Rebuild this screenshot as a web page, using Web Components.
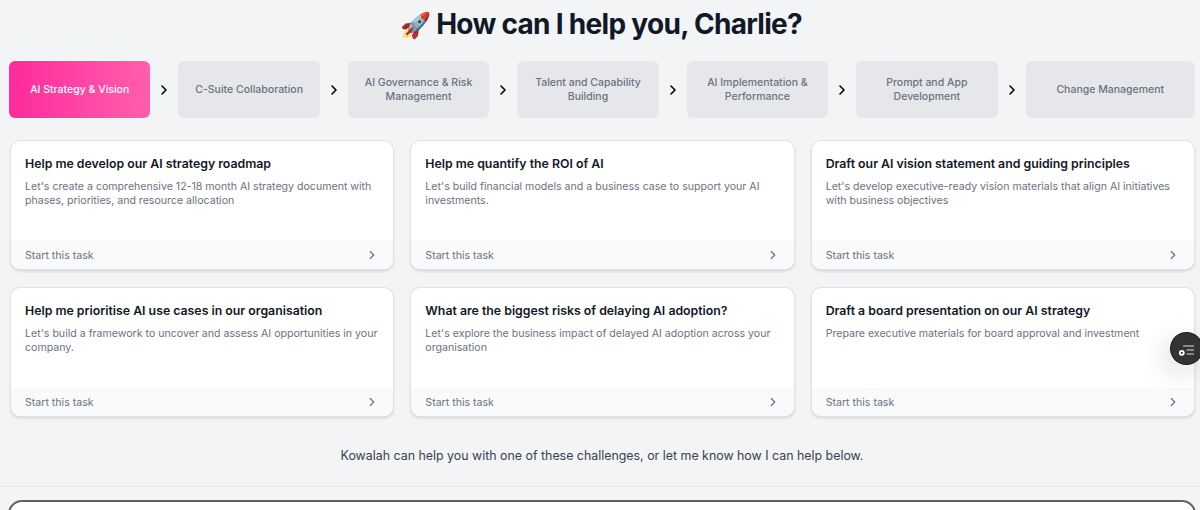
<!DOCTYPE html>
<html lang="en">
<head>
<meta charset="utf-8">
<title>How can I help you</title>
<style>
  html, body { margin: 0; height: 510px; overflow: hidden; background: #f3f4f6; }
  body { font-family: Inter, "Liberation Sans", sans-serif; color: #111827; }
  .rocket { font-size: 25px; }
</style>
</head>
<body>
<x-help-page>
  <span slot="title"><span class="rocket">🚀</span> How can I help you, Charlie?</span>
  <x-step-bar slot="steps">
    <x-step active>AI Strategy &amp; Vision</x-step>
    <x-step>C-Suite Collaboration</x-step>
    <x-step>AI Governance &amp; Risk Management</x-step>
    <x-step>Talent and Capability Building</x-step>
    <x-step>AI Implementation &amp; Performance</x-step>
    <x-step>Prompt and App Development</x-step>
    <x-step>Change Management</x-step>
  </x-step-bar>
  <x-task-grid slot="tasks">
    <x-task-card heading="Help me develop our AI strategy roadmap">Let's create a comprehensive 12-18 month AI strategy document with phases, priorities, and resource allocation</x-task-card>
    <x-task-card heading="Help me quantify the ROI of AI">Let's build financial models and a business case to support your AI investments.</x-task-card>
    <x-task-card heading="Draft our AI vision statement and guiding principles">Let's develop executive-ready vision materials that align AI initiatives with business objectives</x-task-card>
    <x-task-card heading="Help me prioritise AI use cases in our organisation">Let's build a framework to uncover and assess AI opportunities in your company.</x-task-card>
    <x-task-card heading="What are the biggest risks of delaying AI adoption?">Let's explore the business impact of delayed AI adoption across your organisation</x-task-card>
    <x-task-card heading="Draft a board presentation on our AI strategy">Prepare executive materials for board approval and investment</x-task-card>
  </x-task-grid>
  <span slot="hint">Kowalah can help you with one of these challenges, or let me know how I can help below.</span>
  <x-chat-box slot="chat"></x-chat-box>
</x-help-page>
<x-fab></x-fab>

<script>
const CHEVRON = `<svg viewBox="0 0 24 24" fill="none" stroke="currentColor" stroke-linecap="round" stroke-linejoin="round"><path d="m9 18 6-6-6-6"/></svg>`;

class HelpPage extends HTMLElement {
  constructor() {
    super();
    this.attachShadow({ mode: "open" });
    this.shadowRoot.innerHTML = `
      <style>
        :host { display: block; height: 510px; overflow: hidden; }
        h1 {
          margin: 0;
          padding: 6px 0 0 2px;
          height: 61px;
          box-sizing: border-box;
          font-size: 28px;
          line-height: 36px;
          font-weight: 700;
          letter-spacing: -0.7px;
          text-align: center;
          color: #111827;
        }
        .steps { padding: 0 5px 0 9px; }
        .tasks { padding: 23px 6px 0 11px; }
        .hint {
          margin: 0;
          padding: 30px 0 0 4px;
          height: 71px;
          box-sizing: border-box;
          font-size: 12.4px;
          line-height: 20px;
          text-align: center;
          color: #374151;
          border-bottom: 1px solid #e5e7eb;
        }
        .chat { padding: 13px 4px 0 8px; }
      </style>
      <h1><slot name="title"></slot></h1>
      <div class="steps"><slot name="steps"></slot></div>
      <div class="tasks"><slot name="tasks"></slot></div>
      <p class="hint"><slot name="hint"></slot></p>
      <div class="chat"><slot name="chat"></slot></div>
    `;
  }
}

class StepBar extends HTMLElement {
  constructor() {
    super();
    this.attachShadow({ mode: "open" });
    this.shadowRoot.innerHTML = `
      <style>
        :host { display: flex; height: 57px; align-items: stretch; }
      </style>
      <slot></slot>
    `;
  }
}

class Step extends HTMLElement {
  constructor() {
    super();
    this.attachShadow({ mode: "open" });
    this.shadowRoot.innerHTML = `
      <style>
        :host { display: flex; flex: 1 1 0; align-items: center; min-width: 0; }
        :host(:last-child) .arrow { display: none; }
        .pill {
          flex: 1 1 0;
          align-self: stretch;
          display: flex;
          align-items: center;
          justify-content: center;
          padding: 0 14px;
          box-sizing: border-box;
          text-align: center;
          font-size: 10.5px;
          line-height: 14px;
          font-weight: 500;
          border-radius: 6px;
          background: #e5e7eb;
          color: #6b7280;
        }
        :host([active]) .pill {
          background: linear-gradient(to right, #ff2a9d, #ff5fab);
          color: #fff;
        }
        .arrow { flex: 0 0 28px; display: flex; justify-content: center; color: #000; }
        .arrow svg { width: 16px; height: 16px; stroke-width: 2.4; }
      </style>
      <div class="pill"><slot></slot></div>
      <div class="arrow">${CHEVRON}</div>
    `;
  }
}

class TaskGrid extends HTMLElement {
  constructor() {
    super();
    this.attachShadow({ mode: "open" });
    this.shadowRoot.innerHTML = `
      <style>
        :host { display: grid; grid-template-columns: repeat(3, 1fr); gap: 19px 18px; }
      </style>
      <slot></slot>
    `;
  }
}

class TaskCard extends HTMLElement {
  constructor() {
    super();
    this.attachShadow({ mode: "open" });
    this.shadowRoot.innerHTML = `
      <style>
        :host {
          display: flex;
          flex-direction: column;
          height: 128px;
          box-sizing: border-box;
          background: #fff;
          border-radius: 9px;
          box-shadow: 0 0 0 1px #e0e2e6, 0 1px 0 1px #dadce0, 0 2px 3px 1px rgba(0,0,0,.08);
          overflow: hidden;
        }
        .body { flex: 1; padding: 14px 14px 0; }
        h3 {
          margin: 0 0 8px;
          font-size: 12.3px;
          line-height: 17px;
          font-weight: 600;
          color: #111827;
        }
        p {
          margin: 0;
          font-size: 10.6px;
          line-height: 14px;
          color: #6b7280;
        }
        .foot {
          height: 28px;
          padding: 0 14px;
          display: flex;
          align-items: center;
          justify-content: space-between;
          background: #f9fafb;
          font-size: 10.6px;
          color: #6b7280;
        }
        .foot svg { width: 14px; height: 14px; stroke-width: 2; }
      </style>
      <div class="body">
        <h3></h3>
        <p><slot></slot></p>
      </div>
      <div class="foot"><span>Start this task</span>${CHEVRON}</div>
    `;
    this.shadowRoot.querySelector("h3").textContent = this.getAttribute("heading");
  }
}

class ChatBox extends HTMLElement {
  constructor() {
    super();
    this.attachShadow({ mode: "open" });
    this.shadowRoot.innerHTML = `
      <style>
        :host {
          display: block;
          height: 60px;
          box-sizing: border-box;
          background: #fff;
          border: 2px solid #5f6368;
          border-radius: 14px;
        }
      </style>
    `;
  }
}

class Fab extends HTMLElement {
  constructor() {
    super();
    this.attachShadow({ mode: "open" });
    this.shadowRoot.innerHTML = `
      <style>
        :host {
          position: fixed;
          left: 1171px;
          top: 333px;
          width: 31px;
          height: 31px;
          border-radius: 50%;
          background: #333;
          box-shadow: 0 0 0 1px #1a1a1a, -6px 8px 28px rgba(0,0,0,.16);
          display: flex;
          align-items: center;
          justify-content: center;
        }
        svg { width: 18px; height: 18px; }
      </style>
      <svg viewBox="0 0 18 18" fill="none" stroke="#ddd" stroke-width="1.2" stroke-linecap="round">
        <path d="M5.5 6h10M9 10h6.5M9 14h6.5" />
        <circle cx="3.8" cy="12.8" r="2.9" fill="#fff" stroke="none"/>
        <circle cx="3.8" cy="12.8" r="1.1" fill="#333" stroke="none"/>
      </svg>
    `;
  }
}

customElements.define("x-help-page", HelpPage);
customElements.define("x-step-bar", StepBar);
customElements.define("x-step", Step);
customElements.define("x-task-grid", TaskGrid);
customElements.define("x-task-card", TaskCard);
customElements.define("x-chat-box", ChatBox);
customElements.define("x-fab", Fab);
</script>
</body>
</html>
